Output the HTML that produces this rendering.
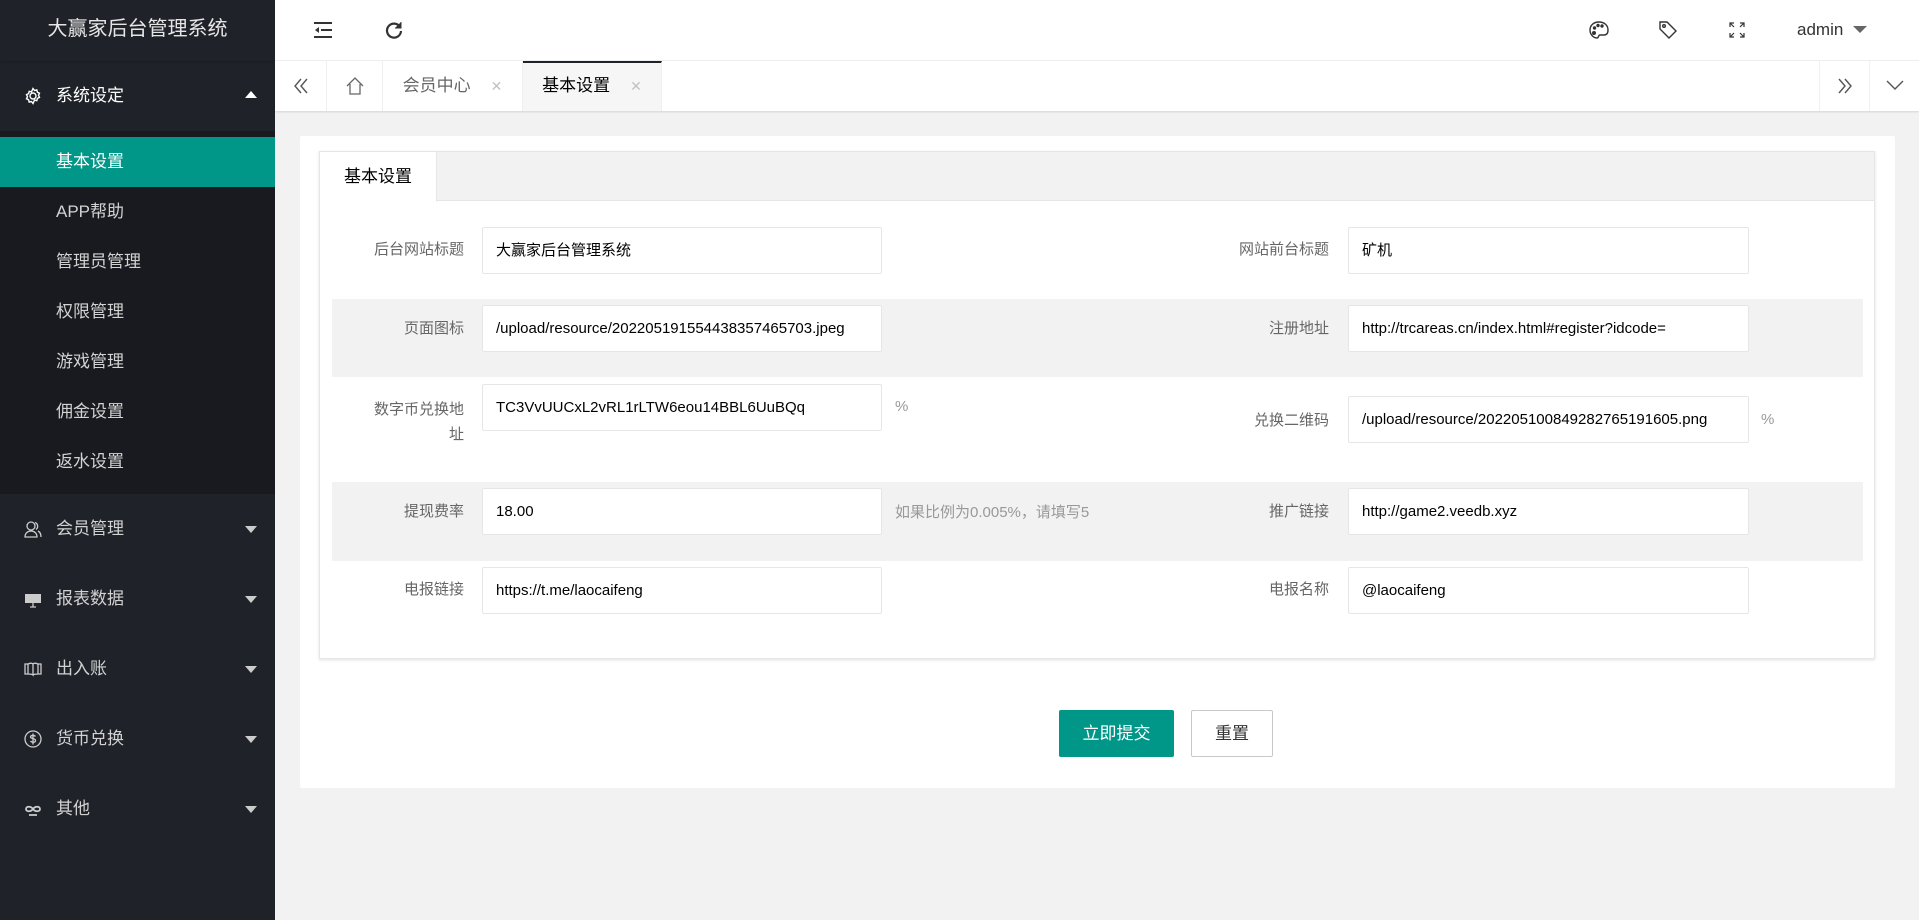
<!DOCTYPE html>
<html><head><meta charset="utf-8">
<style>
*{margin:0;padding:0;box-sizing:border-box}
body{width:1919px;height:920px;overflow:hidden;background:#f2f2f2;font-family:"Liberation Sans","Noto Sans CJK SC",sans-serif;position:relative}
.abs{position:absolute}
#side{left:0;top:0;width:275px;height:920px;background:#20222a}
.logo{left:0;top:0;width:275px;height:61px;line-height:59px;text-align:center;color:#e6e6e6;font-size:20px;box-shadow:0 1px 2px rgba(0,0,0,.2)}
.mi{left:0;width:275px;height:70px;line-height:70px;color:#d2d2d2;font-size:17px;padding-left:56px}
.mi svg{position:absolute;left:24px;top:26px}
.mi .car{position:absolute;right:18px;top:32px;width:0;height:0;border-left:6px solid transparent;border-right:6px solid transparent;border-top:7px solid #ccc}
.mi .up{border-top:none;border-bottom:7px solid #fff;top:30px}
.sub{left:0;top:131px;width:275px;height:363px;background:#191a1f}
.si{left:0;width:275px;height:50px;line-height:50px;padding-left:56px;color:#d2d2d2;font-size:17px}
#hdr{left:275px;top:0;width:1644px;height:61px;background:#fff;border-bottom:1px solid #f0f0f0}
#tabs{left:275px;top:61px;width:1644px;height:50px;background:#fff;box-shadow:0 1px 2px rgba(0,0,0,.12)}
.tb{top:0;height:50px;line-height:50px;border-right:1px solid #f0f0f0;text-align:center;color:#666;font-size:17px}
.card{left:300px;top:136px;width:1595px;height:652px;background:#fff;border-radius:2px}
.tbox{left:319px;top:151px;width:1556px;height:508px;background:#fff;border:1px solid #e6e6e6;box-shadow:0 1px 3px rgba(0,0,0,.12)}
.thead{left:320px;top:152px;width:1554px;height:49px;background:#f2f2f2;border-bottom:1px solid #e6e6e6}
.ttl{left:320px;top:152px;width:117px;height:50px;background:#fff;line-height:50px;text-align:center;font-size:17px;color:#000;border-right:1px solid #e6e6e6}
.gray{left:332px;width:1531px;background:#f2f2f2}
.lb{width:200px;text-align:right;color:#666;font-size:15px;line-height:22px}
.in{height:47px;background:#fff;border:1px solid #e6e6e6;border-radius:2px;padding-left:13px;line-height:45px;font-size:15px;color:#000;white-space:nowrap;overflow:hidden}
.hint{color:#999;font-size:15px}
.x{color:#c2c2c2;margin-left:20px;font-size:14px}
</style></head><body>
<div id="side" class="abs">
 <div class="abs logo">大赢家后台管理系统</div>
 <div class="abs mi" style="top:61px;color:#fff">
  <svg width="18" height="18" viewBox="0 0 18 18" fill="none" stroke="#fff" stroke-width="1.4"><circle cx="9" cy="9" r="3"/><path d="M9 1.5l1.5 2 2.3-.6.6 2.3 2.1 1-1 2.1 1 2.1-2.1 1-.6 2.3-2.3-.6L9 16.5l-1.5-2-2.3.6-.6-2.3-2.1-1 1-2.1-1-2.1 2.1-1 .6-2.3 2.3.6z"/></svg>
  系统设定<span class="car up"></span></div>
 <div class="abs sub"></div>
 <div class="abs si" style="top:137px;background:#009688;color:#fff">基本设置</div>
 <div class="abs si" style="top:187px">APP帮助</div>
 <div class="abs si" style="top:237px">管理员管理</div>
 <div class="abs si" style="top:287px">权限管理</div>
 <div class="abs si" style="top:337px">游戏管理</div>
 <div class="abs si" style="top:387px">佣金设置</div>
 <div class="abs si" style="top:437px">返水设置</div>
 <div class="abs mi" style="top:494px"><svg width="18" height="18" viewBox="0 0 18 18" fill="none" stroke="#ccc" stroke-width="1.3"><circle cx="7" cy="6" r="4"/><path d="M1 17c0-4 3-6 6-6s6 2 6 6z M11 2.5a4 4 0 0 1 1 7 M14 11c2 1 3 3 3 6"/></svg>会员管理<span class="car"></span></div>
 <div class="abs mi" style="top:564px"><svg width="18" height="18" viewBox="0 0 18 18"><rect x="1" y="4" width="16" height="9" fill="#ccc"/><path d="M9 13v4M6 17h6" stroke="#ccc" stroke-width="1.3"/></svg>报表数据<span class="car"></span></div>
 <div class="abs mi" style="top:634px"><svg width="18" height="18" viewBox="0 0 18 18" fill="none" stroke="#ccc" stroke-width="1.3"><path d="M1 4h3v10H1zM4 4c2-1 4-1 5 0v11c-1-1-3-1-5-1zM14 4c-2-1-4-1-5 0M14 4h3v10h-3M14 4v10c-2 0-4 0-5 1"/></svg>出入账<span class="car"></span></div>
 <div class="abs mi" style="top:704px"><svg width="18" height="18" viewBox="0 0 18 18" fill="none" stroke="#ccc" stroke-width="1.3"><circle cx="9" cy="9" r="8"/><path d="M11.5 6.5c-1-1.5-5-1.5-5 .5s5 1 5 3.5-4 2-5 .5M9 3.5v11"/></svg>货币兑换<span class="car"></span></div>
 <div class="abs mi" style="top:774px"><svg width="18" height="18" viewBox="0 0 18 18" fill="none" stroke="#ccc" stroke-width="1.8"><path d="M9 9c-2-3-7-3-7 0s5 3 7 0 7-3 7 0-5 3-7 0M5 15h8"/></svg>其他<span class="car"></span></div>
</div>
<div id="hdr" class="abs">
 <svg class="abs" style="left:39px;top:22px" width="18" height="16" viewBox="0 0 18 16"><path d="M0 1h18M7 8h11M0 15h18" stroke="#333" stroke-width="2"/><path d="M5 5l-4 3 4 3z" fill="#333"/></svg>
 <svg class="abs" style="left:110px;top:21px" width="18" height="18" viewBox="0 0 18 18" fill="none" stroke="#333" stroke-width="2.2"><path d="M15 6A7 7 0 1 0 16 10"/><path d="M16 1v6h-6" fill="#333" stroke-width="1"/></svg>
 <svg class="abs" style="left:1314px;top:21px" width="20" height="18" viewBox="0 0 20 18" fill="none" stroke="#333" stroke-width="1.4"><path d="M10 1C4 1 1 5 1 9c0 5 4 8 7 8 2 0 1-3 3-3h4c3 0 4-2 4-5 0-5-4-8-9-8z"/><circle cx="5" cy="12" r="1.3" fill="#333"/><circle cx="5.5" cy="7" r="1" fill="#333"/><circle cx="9" cy="4.5" r="1" fill="#333"/><circle cx="13" cy="5" r="1" fill="#333"/></svg>
 <svg class="abs" style="left:1383px;top:20px" width="20" height="20" viewBox="0 0 20 20" fill="none" stroke="#333" stroke-width="1.4"><path d="M2 2h7l9 9-7 7-9-9z"/><circle cx="6" cy="6" r="1.3"/></svg>
 <svg class="abs" style="left:1454px;top:22px" width="16" height="16" viewBox="0 0 16 16" fill="none" stroke="#333" stroke-width="1.2"><path d="M1 5V1h4M1 1l4 4M11 1h4v4M15 1l-4 4M1 11v4h4M1 15l4-4M15 11v4h-4M15 15l-4-4"/></svg>
 <div class="abs" style="left:1522px;top:0;line-height:59px;font-size:17px;color:#333">admin</div>
 <div class="abs" style="left:1578px;top:26px;width:0;height:0;border-left:7px solid transparent;border-right:7px solid transparent;border-top:7px solid #666"></div>
</div>
<div id="tabs" class="abs">
 <div class="abs tb" style="left:0;width:52px"><svg style="margin-top:17px" width="16" height="16" viewBox="0 0 16 16" fill="none" stroke="#555" stroke-width="1.4"><path d="M8 1L2 8l6 7M14 1L8 8l6 7"/></svg></div>
 <div class="abs tb" style="left:52px;width:56px"><svg style="margin-top:15px" width="20" height="20" viewBox="0 0 20 20" fill="none" stroke="#666" stroke-width="1.3"><path d="M2 10L10 2l8 8M5 8v10h10V8"/></svg></div>
 <div class="abs tb" style="left:108px;width:140px">会员中心<span class="x">✕</span></div>
 <div class="abs tb" style="left:248px;width:139px;background:#f6f6f6;color:#000;border-top:2px solid #20222a;line-height:46px">基本设置<span class="x">✕</span></div>
 <div class="abs tb" style="left:1544px;width:51px;border-left:1px solid #f0f0f0"><svg style="margin-top:17px" width="16" height="16" viewBox="0 0 16 16" fill="none" stroke="#555" stroke-width="1.4"><path d="M2 1l6 7-6 7M8 1l6 7-6 7"/></svg></div>
 <div class="abs tb" style="left:1595px;width:49px;border-right:none"><svg style="margin-top:19px" width="18" height="11" viewBox="0 0 18 11" fill="none" stroke="#555" stroke-width="1.4"><path d="M1 1l8 8 8-8"/></svg></div>
</div>
<div class="abs card"></div>
<div class="abs tbox"></div>
<div class="abs thead"></div>
<div class="abs ttl">基本设置</div>
<div class="abs gray" style="top:299px;height:78px"></div>
<div class="abs gray" style="top:482px;height:79px"></div>

<div class="abs lb" style="left:264px;top:239px">后台网站标题</div>
<div class="abs in" style="left:482px;top:227px;width:400px">大赢家后台管理系统</div>
<div class="abs lb" style="left:1129px;top:239px">网站前台标题</div>
<div class="abs in" style="left:1348px;top:227px;width:401px">矿机</div>

<div class="abs lb" style="left:264px;top:318px">页面图标</div>
<div class="abs in" style="left:482px;top:305px;width:400px">/upload/resource/202205191554438357465703.jpeg</div>
<div class="abs lb" style="left:1129px;top:318px">注册地址</div>
<div class="abs in" style="left:1348px;top:305px;width:401px">http://trcareas.cn/index.html#register?idcode=</div>

<div class="abs lb" style="left:264px;top:397px;line-height:25px">数字币兑换地<br>址</div>
<div class="abs in" style="left:482px;top:384px;width:400px">TC3VvUUCxL2vRL1rLTW6eou14BBL6UuBQq</div>
<div class="abs hint" style="left:895px;top:398px">%</div>
<div class="abs lb" style="left:1129px;top:410px">兑换二维码</div>
<div class="abs in" style="left:1348px;top:396px;width:401px">/upload/resource/202205100849282765191605.png</div>
<div class="abs hint" style="left:1761px;top:411px">%</div>

<div class="abs lb" style="left:264px;top:501px">提现费率</div>
<div class="abs in" style="left:482px;top:488px;width:400px">18.00</div>
<div class="abs hint" style="left:895px;top:501px">如果比例为0.005%，请填写5</div>
<div class="abs lb" style="left:1129px;top:501px">推广链接</div>
<div class="abs in" style="left:1348px;top:488px;width:401px">http://game2.veedb.xyz</div>

<div class="abs lb" style="left:264px;top:579px">电报链接</div>
<div class="abs in" style="left:482px;top:567px;width:400px">https://t.me/laocaifeng</div>
<div class="abs lb" style="left:1129px;top:579px">电报名称</div>
<div class="abs in" style="left:1348px;top:567px;width:401px">@laocaifeng</div>

<div class="abs" style="left:1059px;top:710px;width:115px;height:47px;background:#009688;color:#fff;font-size:17px;line-height:47px;text-align:center;border-radius:2px">立即提交</div>
<div class="abs" style="left:1191px;top:710px;width:82px;height:47px;background:#fff;border:1px solid #c9c9c9;color:#333;font-size:17px;line-height:45px;text-align:center;border-radius:2px">重置</div>
</body></html>
